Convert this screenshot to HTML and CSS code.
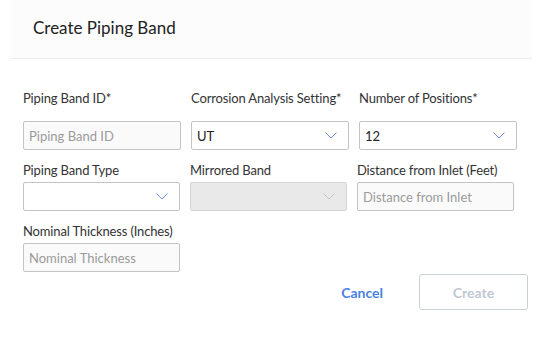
FILE: index.html
```html
<!DOCTYPE html>
<html lang="en">

<head>
    <meta charset="UTF-8" />
    <title>Create Piping Band</title>
    <link rel="stylesheet" href="styles.css">
</head>

<body>

    <div id="dialog">
        <div class="dialog-header">
            <h1>Create Piping Band</h1>
        </div>

        <div class="dialog-body">
            <div class="row row-required">
                <div class="field">
                    <label>Piping Band ID*</label>
                    <div class="input">
                        <span class="placeholder">Piping Band ID</span>
                    </div>
                </div>
                <div class="field">
                    <label>Corrosion Analysis Setting*</label>
                    <div class="input select">
                        <span>UT</span>
                        <svg class="chevron" width="12" height="7" viewBox="0 0 12 7">
                            <polyline points="0.5,0.5 6,6 11.5,0.5" />
                        </svg>
                    </div>
                </div>
                <div class="field">
                    <label>Number of Positions*</label>
                    <div class="input select">
                        <span>12</span>
                        <svg class="chevron" width="12" height="7" viewBox="0 0 12 7">
                            <polyline points="0.5,0.5 6,6 11.5,0.5" />
                        </svg>
                    </div>
                </div>
            </div>

            <div class="row row-optional">
                <div class="field">
                    <label>Piping Band Type</label>
                    <div class="input select">
                        <span></span>
                        <svg class="chevron" width="12" height="7" viewBox="0 0 12 7">
                            <polyline points="0.5,0.5 6,6 11.5,0.5" />
                        </svg>
                    </div>
                </div>
                <div class="field">
                    <label>Mirrored Band</label>
                    <div class="input select disabled">
                        <span></span>
                        <svg class="chevron" width="12" height="7" viewBox="0 0 12 7">
                            <polyline points="0.5,0.5 6,6 11.5,0.5" />
                        </svg>
                    </div>
                </div>
                <div class="field">
                    <label>Distance from Inlet (Feet)</label>
                    <div class="input">
                        <span class="placeholder">Distance from Inlet</span>
                    </div>
                </div>
            </div>

            <div class="row row-optional">
                <div class="field">
                    <label>Nominal Thickness (Inches)</label>
                    <div class="input">
                        <span class="placeholder">Nominal Thickness</span>
                    </div>
                </div>
            </div>

            <div class="actions">
                <button class="btn-cancel">Cancel</button>
                <button class="btn-create">Create</button>
            </div>
        </div>
    </div>

</body>

</html>
```

FILE: styles.css
```css
body {
    font-family: Lato, "Open Sans", sans-serif;
    margin: 0;
    background-color: #fff;
    color: #333;
}

#dialog {
    width: 554px;
    height: 340px;
}

.dialog-header {
    margin-left: 11px;
    width: 521px;
    height: 58px;
    background-color: #fcfcfc;
    border-bottom: 1px solid #ececec;
    box-sizing: content-box;
}

.dialog-header h1 {
    margin: 0;
    padding: 18px 0 0 22px;
    font-size: 17px;
    font-weight: normal;
    line-height: 20px;
    color: #222;
}

.dialog-body {
    padding: 31px 0 0 23px;
}

.row {
    display: grid;
    grid-template-columns: repeat(3, 158px);
    column-gap: 10px;
}

.row-optional {
    grid-template-columns: repeat(3, 157px);
    margin-top: 12px;
}

.field label {
    display: block;
    font-size: 13px;
    line-height: 16px;
    letter-spacing: -0.15px;
    color: #333;
}

.row-required label {
    margin-bottom: 15px;
}

.row-optional label {
    margin-bottom: 4px;
}

.input {
    box-sizing: border-box;
    height: 29px;
    border: 1px solid #c4c4c4;
    border-radius: 2px;
    background-color: #fafafa;
    display: flex;
    align-items: center;
    justify-content: space-between;
    padding: 0 5px;
    font-size: 13px;
    color: #222;
}

.placeholder {
    color: #9a9a9a;
}

.select {
    background-color: #fff;
}

.chevron polyline {
    fill: none;
    stroke: #6c8fe0;
    stroke-width: 1;
}

.select .chevron {
    margin-right: 6px;
}

.disabled {
    background-color: #e9e9e9;
    border-color: #d4d4d4;
}

.disabled .chevron polyline {
    stroke: #c4c4c4;
}

.actions {
    display: flex;
    justify-content: flex-end;
    align-items: center;
    width: 505px;
    margin-top: 2px;
}

.actions button {
    font-family: inherit;
    font-size: 14px;
    font-weight: bold;
    cursor: pointer;
}

.btn-cancel {
    background: none;
    border: none;
    color: #4a7fe3;
    padding: 0;
    margin-right: 36px;
}

.btn-create {
    width: 109px;
    height: 36px;
    background-color: #fff;
    border: 1px solid #c9d0d8;
    border-radius: 3px;
    color: #c1c8d0;
}
```
